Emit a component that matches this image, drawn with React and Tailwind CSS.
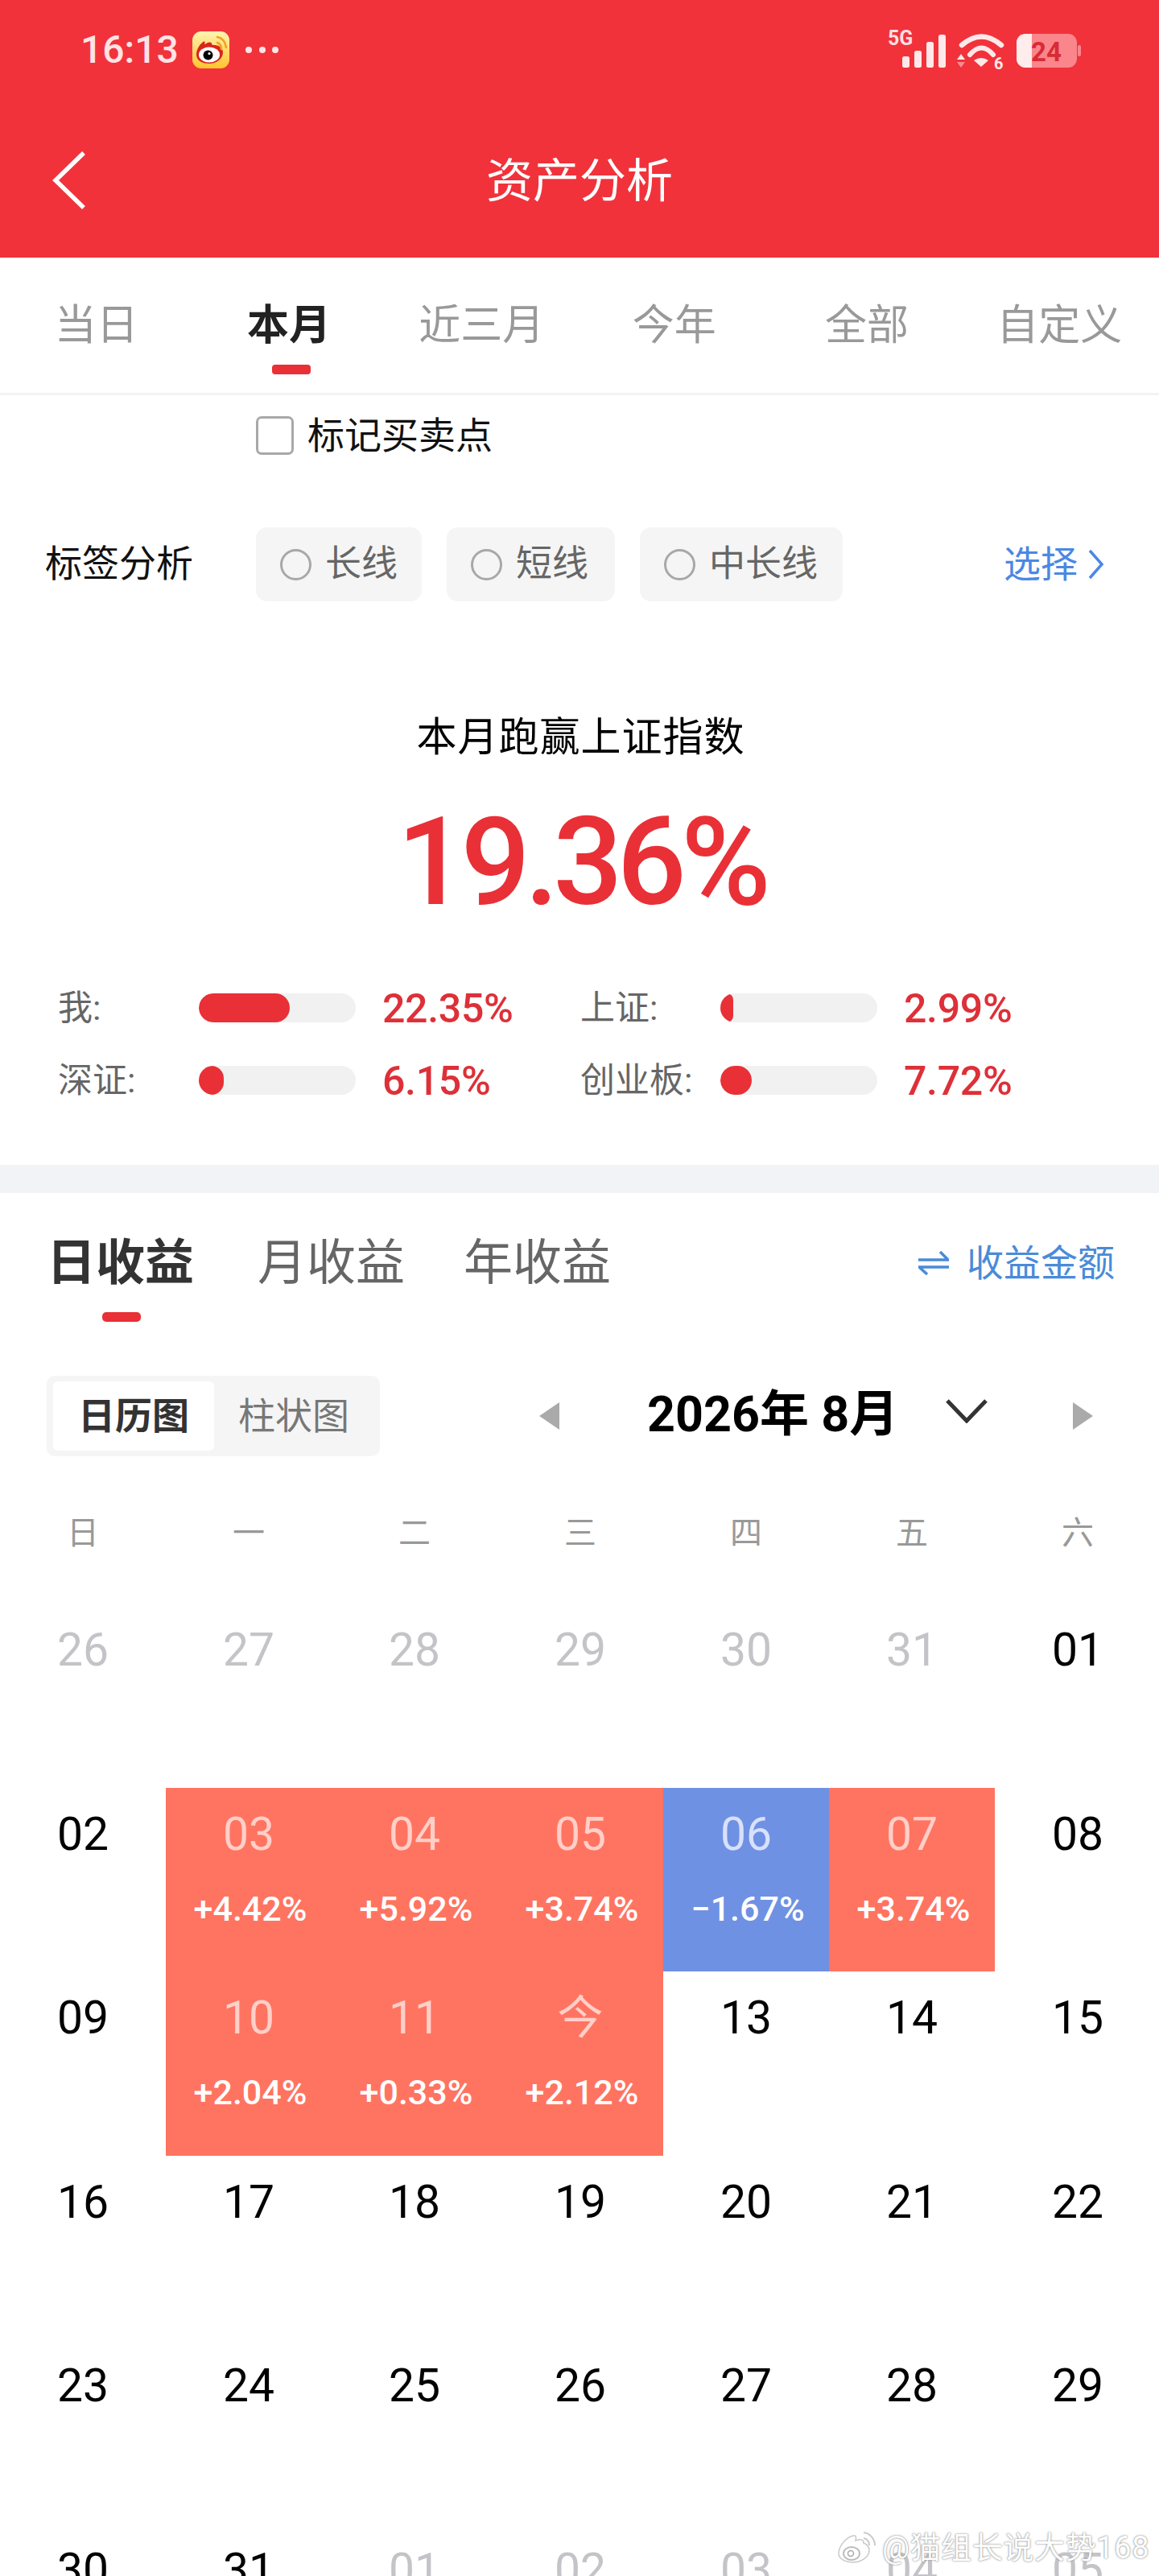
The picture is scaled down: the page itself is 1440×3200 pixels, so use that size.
const tabs = [
  { t: "当日" },
  { t: "本月", on: true },
  { t: "近三月" },
  { t: "今年" },
  { t: "全部" },
  { t: "自定义" },
];

const chips = [
  { t: "长线", w: "w-[206px]" },
  { t: "短线", w: "w-[209px]" },
  { t: "中长线", w: "w-[252px]" },
];

const stats = [
  { l: "我:", v: "22.35%", fill: "w-[113px]", lw: "w-[175px]" },
  { l: "上证:", v: "2.99%", fill: "w-[16px]", lw: "w-[174px]" },
  { l: "深证:", v: "6.15%", fill: "w-[31px]", lw: "w-[175px]" },
  { l: "创业板:", v: "7.72%", fill: "w-[39px]", lw: "w-[174px]" },
];

const weekdays = ["日", "一", "二", "三", "四", "五", "六"];

const g = (d) => ({ d, tone: "muted" });
const n = (d) => ({ d, tone: "plain" });
const up = (d, v) => ({ d, v, tone: "up" });
const down = (d, v) => ({ d, v, tone: "down" });

const days = [
  g("26"), g("27"), g("28"), g("29"), g("30"), g("31"), n("01"),
  n("02"), up("03", "+4.42%"), up("04", "+5.92%"), up("05", "+3.74%"), down("06", "−1.67%"), up("07", "+3.74%"), n("08"),
  n("09"), up("10", "+2.04%"), up("11", "+0.33%"), up("今", "+2.12%"), n("13"), n("14"), n("15"),
  n("16"), n("17"), n("18"), n("19"), n("20"), n("21"), n("22"),
  n("23"), n("24"), n("25"), n("26"), n("27"), n("28"), n("29"),
  n("30"), n("31"), g("01"), g("02"), g("03"), g("04"), g("05"),
];

const toneBox = { muted: "", plain: "", up: "bg-[#ff7461]", down: "bg-[#6f91e3]" };
const toneDate = {
  muted: "text-[#c4c4c8]",
  plain: "text-black",
  up: "text-[#ffcfc8]",
  down: "text-[#d8e1fb]",
};

function WeiboBadge() {
  return (
    <svg width="46" height="46" viewBox="0 0 46 46">
      <defs>
        <linearGradient id="wb" x1="0" y1="0" x2="0" y2="1">
          <stop offset="0" stopColor="#fff4b0" />
          <stop offset="1" stopColor="#ffc42e" />
        </linearGradient>
      </defs>
      <rect width="46" height="46" rx="11" fill="url(#wb)" />
      <path d="M5 29c0-8 5-14 10-17 1 2 0 4 1 4 3-3 6-3 8-2-1 2 1 3 4 3 5 0 10 4 10 9 0 8-8 14-17 14S5 36 5 29z" fill="#d9261c" />
      <ellipse cx="21" cy="29" rx="13" ry="9.5" fill="#fff" />
      <circle cx="19.5" cy="29.5" r="6" fill="#000" />
      <circle cx="21" cy="27.5" r="1.6" fill="#fff" />
      <path d="M31 14c3 1 5 4 5 8M31 7c6 1 10 6 11 13" stroke="#f2a11f" strokeWidth="2.6" fill="none" strokeLinecap="round" />
    </svg>
  );
}

function StatusIcons() {
  return (
    <svg width="246" height="50" viewBox="1100 36 246 50" className="font-['Roboto'] font-bold">
      <text x="1103" y="55" fontSize="25" fill="#ffdfe1">5G</text>
      <rect x="1121" y="69" width="9" height="14" rx="2.5" fill="#ffe8e9" />
      <rect x="1136" y="62" width="9" height="21" rx="2.5" fill="#ffe8e9" />
      <rect x="1151" y="51" width="9" height="32" rx="2.5" fill="#ffe8e9" />
      <rect x="1166" y="42" width="9" height="41" rx="2.5" fill="#ffe8e9" />
      <path d="M1195 55Q1219.5 34 1244 55" stroke="#ffe8e9" strokeWidth="6.5" fill="none" strokeLinecap="round" />
      <path d="M1205 67Q1219.5 50 1234 67" stroke="#ffe8e9" strokeWidth="6" fill="none" strokeLinecap="round" />
      <path d="M1210 74Q1219 68 1228 74L1219 82Z" fill="#ffe8e9" />
      <path d="M1194 66L1199 73H1189Z" fill="#ffe8e9" />
      <path d="M1189 76H1199L1194 83Z" fill="#fb8a8f" />
      <text x="1235" y="85" fontSize="20" fill="#ffe8e9">6</text>
      <rect x="1263" y="41" width="75" height="42" rx="11" fill="#fa868c" />
      <rect x="1339" y="55" width="4" height="14" rx="2" fill="#fa868c" />
      <path d="M1274 41H1282V83H1274A11 11 0 0 1 1263 72V52A11 11 0 0 1 1274 41Z" fill="#ffeced" />
      <text x="1281" y="75" fontSize="33" fill="#d92a36">24</text>
    </svg>
  );
}

function Stat({ item }) {
  return (
    <div className="flex h-[90px] items-center">
      <span className={`${item.lw} text-[43px] leading-[50px] text-[#666666]`}>{item.l}</span>
      <div className="h-[36px] w-[195px] overflow-hidden rounded-full bg-[#f1f1f2]">
        <div className={`${item.fill} h-full rounded-full bg-[#e93037]`} />
      </div>
      <span className="ml-[33px] mt-[2px] text-[50px] font-medium leading-[56px] tracking-[-0.3px] text-[#dd3038]">{item.v}</span>
    </div>
  );
}

function Day({ item }) {
  return (
    <div className={`flex h-[228.5px] flex-col items-center pt-[26px] ${toneBox[item.tone]}`}>
      <span className={`h-[64px] text-[57px] leading-[64px] ${toneDate[item.tone]}`}>{item.d}</span>
      {item.v && <span className="ml-[4px] mt-[30px] text-[43px] font-medium leading-[60px] text-white">{item.v}</span>}
    </div>
  );
}

export default function App() {
  return (
    <div className="relative h-[3200px] w-[1440px] overflow-hidden bg-white font-['Roboto','Noto_Sans_CJK_SC',sans-serif]">
      <header className="h-[320px] bg-[#f1323b]">
        <div className="flex h-[124px] items-center justify-between pl-[100px] pr-[94px]">
          <div className="flex items-center">
            <span className="w-[139px] text-[48px] font-medium leading-[56px] text-[#ffe3e5]">16:13</span>
            <WeiboBadge />
            <svg width="46" height="10" viewBox="0 0 46 10" className="ml-[18px]">
              <circle cx="6" cy="5" r="4" fill="#ffe3e5" />
              <circle cx="23" cy="5" r="4" fill="#ffe3e5" />
              <circle cx="39" cy="5" r="4" fill="#ffe3e5" />
            </svg>
          </div>
          <StatusIcons />
        </div>
        <div className="mt-[41px] grid h-[120px] grid-cols-[1fr_auto_1fr] items-center">
          <svg width="48" height="76" viewBox="0 0 48 76" className="mb-[2px] ml-[62px]">
            <path d="M42 4L7 38L42 72" stroke="#fff" strokeWidth="5.5" fill="none" />
          </svg>
          <span className="text-[58px] leading-[70px] text-white">资产分析</span>
        </div>
      </header>

      <nav className="border-b-[3px] border-[#f3f3f3]">
        <div className="grid h-[168px] w-[1436px] grid-cols-6">
          {tabs.map((tab) => (
            <div key={tab.t} className="flex flex-col items-center pt-[55px]">
              <span className={`text-[52px] leading-[60px] ${tab.on ? "font-bold text-[#222222]" : "text-[#999999]"}`}>{tab.t}</span>
              {tab.on && <span className="ml-[6px] mt-[18px] h-[12px] w-[48px] rounded-[4px] bg-[#e93037]" />}
            </div>
          ))}
        </div>
      </nav>

      <div className="flex h-[100px] items-center pl-[318px]">
        <span className="h-[48px] w-[47px] rounded-[7px] border-[3px] border-[#a8a8a8]" />
        <span className="ml-[17px] text-[46px] leading-[56px] text-[#111111]">标记买卖点</span>
      </div>

      <div className="mt-[64px] flex h-[92px] items-center pl-[56px] pr-[68px]">
        <span className="mb-[2px] w-[262px] text-[46px] leading-[56px] text-[#111111]">标签分析</span>
        <div className="flex gap-[31px]">
          {chips.map((c) => (
            <div key={c.t} className={`${c.w} flex h-[92px] items-center rounded-[14px] bg-[#f5f5f5] pl-[30px]`}>
              <span className="h-[39px] w-[39px] rounded-full border-[3px] border-[#a8a8a8]" />
              <span className="ml-[17px] text-[45px] leading-[56px] text-[#666666]">{c.t}</span>
            </div>
          ))}
        </div>
        <div className="ml-auto flex items-center text-[#4b88e3]">
          <span className="text-[46px] leading-[56px]">选择</span>
          <svg width="20" height="38" viewBox="0 0 20 38" className="ml-[13px]">
            <path d="M2 2L17 19L2 36" stroke="#4b88e3" strokeWidth="3.5" fill="none" />
          </svg>
        </div>
      </div>

      <section className="flex flex-col items-center pt-[139px]">
        <h2 className="ml-[3px] text-[50px] font-normal leading-[60px] tracking-[1px] text-black">本月跑赢上证指数</h2>
        <div className="ml-[4px] mt-[50px] text-[152px] font-medium leading-[150px] tracking-[-7px] text-[#e93037]">19.36%</div>
      </section>

      <section className="mt-[61px] grid grid-cols-[649px_1fr] pb-[60px] pl-[72px]">
        {stats.map((s) => (
          <Stat key={s.l} item={s} />
        ))}
      </section>

      <div className="h-[35px] bg-[#f2f3f7]" />

      <section className="flex items-center justify-between pl-[58px] pr-[55px] pt-[51px]">
        <div className="flex text-[61px] leading-[72px] text-[#666666]">
          <span className="w-[262px] font-bold text-[#333333]">日收益</span>
          <span className="w-[256px]">月收益</span>
          <span>年收益</span>
        </div>
        <div className="flex items-center text-[#4a8bd8]">
          <svg width="38" height="30" viewBox="0 0 38 30">
            <path d="M0 11H37L27 1" stroke="#4a8bd8" strokeWidth="3.5" fill="none" />
            <path d="M38 20H1L11 29" stroke="#4a8bd8" strokeWidth="3.5" fill="none" />
          </svg>
          <span className="ml-[22px] text-[46px] leading-[56px]">收益金额</span>
        </div>
      </section>
      <div className="ml-[127px] mt-[25px] h-[12px] w-[48px] rounded-[5px] bg-[#e93037]" />

      <section className="mt-[67px] flex h-[100px] items-center pl-[58px]">
        <div className="flex h-[100px] w-[414px] items-center rounded-[10px] bg-[#f5f5f5] pl-[8px]">
          <div className="flex h-[86px] w-[200px] items-center justify-center rounded-[6px] bg-white text-[46px] font-bold leading-[52px] text-[#333333]">日历图</div>
          <div className="ml-[30px] text-[46px] leading-[52px] text-[#777777]">柱状图</div>
        </div>
        <svg width="25" height="34" viewBox="0 0 25 34" className="ml-[198px]">
          <path d="M25 0V34L0 17Z" fill="#aaaaaa" />
        </svg>
        <div className="mb-[4px] ml-[109px] w-[307px] whitespace-pre text-[61px] font-bold leading-[72px] text-black">2026年 8月</div>
        <svg width="52" height="30" viewBox="0 0 52 30" className="mb-[12px] ml-[64px]">
          <path d="M2 2L26 27L50 2" stroke="#333333" strokeWidth="5" fill="none" />
        </svg>
        <svg width="25" height="34" viewBox="0 0 25 34" className="ml-[106px]">
          <path d="M0 0V34L25 17Z" fill="#aaaaaa" />
        </svg>
      </section>

      <div className="mt-[66px] grid h-[60px] grid-cols-[repeat(7,206px)]">
        {weekdays.map((w) => (
          <span key={w} className="text-center text-[40px] leading-[60px] text-[#999999]">{w}</span>
        ))}
      </div>

      <div className="mt-[57px] grid grid-cols-[repeat(7,206px)]">
        {days.map((item, i) => (
          <Day key={i} item={item} />
        ))}
      </div>

      <div className="absolute left-[1040px] top-[3143px] flex items-center">
        <svg width="50" height="42" viewBox="0 0 50 42">
          <path d="M2 28c0-9 9-20 18-22 4-1 4 3 3 6 5-2 10-2 10 3 5 2 7 5 7 9 0 9-11 15-20 15S2 35 2 28z" fill="#fff" stroke="#c9c9c9" strokeWidth="1.5" />
          <ellipse cx="18" cy="28" rx="10" ry="8" fill="#fff" stroke="#bdbdbd" strokeWidth="2" />
          <circle cx="17" cy="28" r="3.5" fill="#fff" stroke="#a8a8a8" strokeWidth="1.5" />
          <path d="M33 9c5 1 7 5 7 9M33 2c8 1 14 8 14 16" stroke="#c9c9c9" strokeWidth="2" fill="none" />
        </svg>
        <span className="ml-[6px] text-[38px] leading-[44px] tracking-[0.6px] text-white [text-shadow:0_0_1px_#777777,0_0_3px_#a0a0a0]">@猫组长说大势168</span>
      </div>
    </div>
  );
}
